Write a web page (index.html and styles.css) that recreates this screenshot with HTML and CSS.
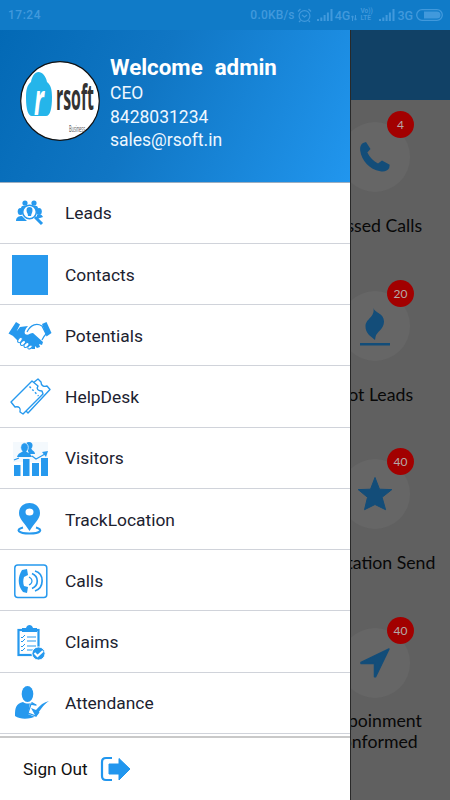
FILE: index.html
```html
<!DOCTYPE html>
<html lang="en">
<head>
<meta charset="utf-8">
<title>Dashboard menu</title>
<link rel="stylesheet" href="styles.css">
</head>
<body>
<div class="screen">
  <header class="status">
    <span class="clock">17:24</span>
    <span class="speed">0.0KB/s</span>
    <svg class="alarm" width="15" height="15" viewBox="0 0 15 15"><g fill="none" stroke="currentColor" stroke-width="1.2"><circle cx="7.5" cy="8" r="5.4"/><path d="M5 7l2.5 2L10 7M1 3.5L3.5 1M14 3.5L11.5 1M3.5 12.5L2 14M11.5 12.5L13 14"/></g></svg>
    <svg class="signal" width="16" height="12" viewBox="0 0 16 12"><path fill="currentColor" d="M0 10h2v2H0zM3.3 8.500h2V12h-2zM6.600 6h2v6h-2zM9.900 3.500h2V12h-2zM13.500 0h2v12h-2z"/></svg>
    <span class="net">4G</span>
    <svg class="data" width="6" height="6" viewBox="0 0 6 6"><path d="M1.500 6V1M0 2.500L1.500.8 2.800 2.500M4.500 0v5M3.200 3.500L4.500 5.200 6 3.500" fill="none" stroke="currentColor"/></svg>
    <span class="volte"><span>Vo))</span><span>LTE</span></span>
    <svg class="signal second" width="16" height="12" viewBox="0 0 16 12"><path fill="currentColor" d="M0 10h2v2H0zM3.300 8.500h2V12h-2zM6.600 6h2v6h-2zM9.900 3.500h2V12h-2zM13.500 0h2v12h-2z"/></svg>
    <span class="net">3G</span>
    <svg class="battery" width="27" height="12" viewBox="0 0 27 12"><rect x=".7" y=".7" width="25.600" height="10.600" rx="5.300" fill="none" stroke="currentColor" stroke-width="1.300"/><path fill="currentColor" d="M8 2.500h13a3.500 3.500 0 0 1 0 7H8z"/></svg>
  </header>

  <main class="dashboard">
    <div class="appbar"></div>
    <div class="cards">
      <section class="card">
        <div class="disc"><svg width="30" height="30" viewBox="0 0 30 30"><path fill="currentColor" d="M3 1L6 0l4.500 7-3.200 3.500c2.500 5 6.200 8.600 10.700 11l4-3 7.700 4.300-.5 3.200c-1.500 3-5 4-9 3.200C9.500 27.500 1.500 18.500.2 8.500-.2 5 .8 2.400 3 1z"/></svg><span class="badge">4</span></div>
        <div class="label">Missed Calls</div>
      </section>
      <section class="card">
        <div class="disc"><svg class="flame" width="30" height="38" viewBox="0 0 30 38"><path fill="currentColor" d="M13.500 0c1 5 10.500 5 10.500 13.500 0 8-7.500 10-8.500 15.500L15 32C10 28 5.500 25 5.500 18.500 5.500 10.500 15 9.500 13.500 0zM0 35h30v2.500H0z"/></svg><span class="badge">20</span></div>
        <div class="label">Hot Leads</div>
      </section>
      <section class="card">
        <div class="disc"><svg width="36" height="36" viewBox="0 0 36 36"><path fill="currentColor" stroke="currentColor" stroke-linejoin="round" d="M18 1.500l4.500 11.700 12.300.4-9.700 7.700 3.500 12.400L18 28.500 7.500 33.700 10.500 21.300l-9.300-7.700 12.300-.4z"/></svg><span class="badge">40</span></div>
        <div class="label">Quotation Send</div>
      </section>
      <section class="card">
        <div class="disc"><svg width="30" height="30" viewBox="0 0 30 30"><path fill="currentColor" stroke="currentColor" stroke-linejoin="round" stroke-width="1.500" d="M29 1L15.500 28.800h-1V15.500H1v-1z"/></svg><span class="badge">40</span></div>
        <div class="label">Appoinment<br>Conformed</div>
      </section>
    </div>
  </main>

  <aside class="drawer">
    <div class="profile">
      <svg class="avatar" width="80" height="80" viewBox="0 0 80 80">
        <circle cx="40" cy="40" r="39.300" fill="#fff" stroke="#111" stroke-width="1.200"/>
        <path fill="#25b5ea" d="M11 21c1-6 4-10 7.500-10S26 15 27 21c4 3 5 8 5 15 0 12-2 19-6 19H12c-4 0-6-7-6-18 0-8 1-13 5-16z"/>
        <text class="mark" x="14" y="54" textLength="10" lengthAdjust="spacingAndGlyphs">r</text>
        <text class="brand" x="36" y="49" textLength="38" lengthAdjust="spacingAndGlyphs">rsoft</text>
        <text class="tagline" x="49" y="71" textLength="16" lengthAdjust="spacingAndGlyphs">Business</text>
      </svg>
      <div class="who">
        <h1><span>Welcome</span> <span>admin</span></h1>
        <p>CEO</p>
        <p>8428031234</p>
        <p>sales@rsoft.in</p>
      </div>
    </div>
    <nav class="menu">
      <a class="item"><span class="icon"><svg width="36" height="40" viewBox="0 0 36 40"><g fill="currentColor"><circle cx="13" cy="10" r="2.600"/><circle cx="22" cy="10" r="2.600"/><path d="M9 15c0-3 7-3 8-1l-7 5zM26 15c0-3-7-3-8-1l7 5z"/><ellipse cx="8.500" cy="18.500" rx="2.800" ry="3.500"/><ellipse cx="27" cy="18.500" rx="2.800" ry="3.500"/><path d="M4 28c0-4 3-5 6-5l5 5zM31 24c-1-3-4-3-6-2v4z"/></g><circle cx="17.500" cy="19" r="6.800" fill="#fff" stroke="currentColor" stroke-width="1.500"/><path fill="currentColor" d="M17.500 14a3 3 0 0 1 3 3c0 3-1 3-1.500 6h-3c0-3-1.500-3-1.500-6a3 3 0 0 1 3-3z"/><path d="M23 24l7 7" stroke="currentColor" stroke-width="3"/></svg></span>Leads</a>
      <a class="item"><span class="icon"><span class="square"></span></span>Contacts</a>
      <a class="item"><span class="icon"><svg width="44" height="40" viewBox="0 0 44 40"><g fill="currentColor"><path d="M8 6l4 2.500-6 12-5.500-3zM34 8l4.500-2 5 11-5 3.500zM12 11l8-1c-3 3-4 6-3 8 3 2 5-1 8-1l10 9-1 3-3-1 1 3-3 1-2-2v3h-3l-7-5-4 0-4-4-4-4z"/></g><path fill="none" stroke="currentColor" stroke-width="1.200" d="M19 16c4-8 10-9 15-6l4 8c-2 2-3 4-4 6M8 20l2 4"/><g fill="#fff" stroke="currentColor"><ellipse cx="12" cy="24" rx="1.800" ry="3" transform="rotate(35 12 24)"/><ellipse cx="15" cy="27" rx="1.800" ry="3" transform="rotate(45 15 27)"/><ellipse cx="18.500" cy="29" rx="1.800" ry="3" transform="rotate(45 18.500 29)"/><ellipse cx="22" cy="31" rx="1.500" ry="2.500" transform="rotate(55 22 31)"/></g></svg></span>Potentials</a>
      <a class="item"><span class="icon"><svg width="42" height="40" viewBox="0 0 42 40"><g fill="#fff" stroke="currentColor" stroke-width="1.400" stroke-linejoin="round"><path d="M24 6l5-4 3 3c0 4 3 5 6 4l3 3.500L19 36l-3-3z"/><path d="M23 4l6 5c-2 3 0 5 4 5l1 3L14 37l-3-2c1-4-1-6-5-5l-4-5z"/><path d="M20.500 9.500l9 9.500" stroke-dasharray="2 2"/></g></svg></span>HelpDesk</a>
      <a class="item"><span class="icon"><svg width="36" height="40" viewBox="0 0 36 40"><path fill="#f4f9fd" d="M1 4h35v20H1z"/><g fill="currentColor"><path d="M2 27h6.500v11H2zM11 21h6.500v17H11zM20 25h7v13h-7zM29 20h7v18h-7z"/><circle cx="17" cy="7.500" r="3.500"/><path d="M15 10h4c1 3 4 3 4 6h-6z"/><ellipse cx="12.500" cy="9.500" rx="3.800" ry="4.700" stroke="#fff" stroke-width=".7"/><path d="M5 19c1-4 4-4 6-6h3c1 2 5 2 6 6zM36 13l-2 6-4-5z"/></g><path d="M2 22l5-2M20 18l4 3 9-5" fill="none" stroke="currentColor" stroke-width="1.200"/></svg></span>Visitors</a>
      <a class="item"><span class="icon"><svg width="36" height="40" viewBox="0 0 36 40"><path fill="currentColor" fill-rule="evenodd" d="M17.500 3C24 3 28 7.500 28 13c0 6-5 9-10.500 18C12 22 7 19 7 13 7 7.500 11 3 17.500 3zm0 5.500a4 3.500 0 1 0 0 7 4 3.500 0 0 0 0-7z"/><path fill="none" stroke="currentColor" stroke-width="2" d="M11 27.500c-8 2-5 6 6.500 6s14-4 6.500-6"/></svg></span>TrackLocation</a>
      <a class="item"><span class="icon"><svg width="36" height="40" viewBox="0 0 36 40"><rect x="2.800" y="4" width="32" height="32.500" rx="3" fill="none" stroke="currentColor" stroke-width="1.500"/><path fill="currentColor" d="M10 9l5-1 1 6-4 2c-1 3-1 6 0 9l4 1-1 6-4-1C5 24 6 15 10 9z"/><path fill="none" stroke="currentColor" stroke-width="1.200" d="M17 16c4 2 4 6 0 8"/><path fill="none" stroke="currentColor" stroke-width="1.700" d="M20 12.500c7 3 7 12 0 15M23 10c10 3 9 17 0 20"/></svg></span>Calls</a>
      <a class="item"><span class="icon"><svg width="36" height="40" viewBox="0 0 36 40"><rect x="6.500" y="8" width="20" height="25" fill="#fff" stroke="currentColor" stroke-width="2.200"/><path fill="currentColor" d="M10 6h4c1-4 6-4 7 0h4v4H10z"/><path fill="none" stroke="currentColor" d="M9 15l1 1 3-3M15 15h9M9 19l1 1 3-3M15 19h9M9 24l1 1 3-3M15 24h9M9 28l1 1 3-3M15 28h6"/><circle cx="26.500" cy="31.500" r="6.600" fill="currentColor" stroke="#fff"/><path fill="none" stroke="#fff" stroke-width="2" d="M22.500 31l3 3 5.500-5"/></svg></span>Claims</a>
      <a class="item"><span class="icon"><svg width="40" height="40" viewBox="0 0 40 40"><g fill="currentColor"><ellipse cx="17.500" cy="11" rx="5.800" ry="8"/><path d="M5 33c0-9 1-12 8-14 3 2 7 2 9 0l5 3v11c-7 3-16 4-22 0z"/></g><path fill="#fff" d="M20 20l11 4-1 12-12-5z"/><path fill="none" stroke="currentColor" stroke-width="1.300" d="M26 22l-5-1-3 9 8 3 3-4"/><path fill="currentColor" d="M21 25l5 2c4-5 8-8 13-9-6 4-9 9-13 16z"/></svg></span>Attendance</a>
    </nav>
    <a class="signout">Sign Out <svg width="32" height="26" viewBox="0 0 32 26"><path fill="none" stroke="currentColor" stroke-width="2.200" d="M12 2H6Q2 2 2 6v14q0 4 4 4h6"/><path fill="currentColor" stroke="currentColor" stroke-linejoin="round" d="M9 8h10V2.500L30 13 19 24v-6H9z"/></svg></a>
  </aside>
</div>
</body>
</html>
```

FILE: styles.css
```css
* { box-sizing: border-box; }
body { margin: 0; font-family: Roboto, "Liberation Sans", sans-serif; }
svg { display: block; flex: none; }
.screen {
  position: relative;
  display: flex;
  flex-direction: column;
  width: 450px;
  height: 800px;
  overflow: hidden;
}
.status {
  display: flex;
  align-items: center;
  height: 30px;
  flex: none;
  padding: 0 7px 0 8px;
  background: #107bc8;
  color: #4199dc;
  font-size: 12px;
  font-weight: 500;
}
.clock { letter-spacing: .5px; }
.speed { margin-left: auto; letter-spacing: .2px; }
.alarm { margin-left: 2px; }
.signal { margin-left: 5px; }
.signal.second { margin-left: 5px; }
.net { margin-left: 2px; font-size: 12.500px; }
.data { margin: 6px 0 0 1px; }
.volte { display: grid; margin-left: 3px; font-size: 6.500px; line-height: 7px; font-weight: 700; width: 14px; }
.battery { margin-left: 3px; }

.dashboard { flex: 1; background: #606060; }
.appbar { height: 70px; background: #114166; }
.cards {
  display: grid;
  grid-auto-rows: 168.500px;
  width: 150px;
  margin-left: auto;
  padding-top: 22px;
}
.card { display: flex; flex-direction: column; align-items: center; gap: 12.500px; }
.disc {
  position: relative;
  display: grid;
  place-items: center;
  width: 70px;
  height: 70px;
  border-radius: 50%;
  background: #666;
  color: #134d79;
}
.flame { margin-top: 2px; }
.badge {
  position: absolute;
  top: -11px;
  right: -4px;
  width: 27px;
  height: 27px;
  border-radius: 50%;
  background: #a20000;
  color: #b5a8a8;
  font: 12px/28px Lato, sans-serif;
  text-align: center;
}
.label {
  display: flex;
  align-items: center;
  height: 42px;
  color: #080808;
  font: 17.700px/21px Lato, sans-serif;
  text-align: center;
  white-space: nowrap;
  margin-right: 2px;
}

.drawer {
  position: absolute;
  top: 30px;
  left: 0;
  bottom: 0;
  display: flex;
  flex-direction: column;
  width: 350px;
  background: #fff;
  box-shadow: 1px 0 #292929;
}
.profile {
  display: flex;
  height: 152.500px;
  flex: none;
  padding: 23px 0 0 20px;
  gap: 10px;
  background: linear-gradient(115deg, #0369b5, #1076c4 42%, #2196ee);
  border-bottom: 1.500px solid #9daec0;
  color: #eef7ff;
}
.avatar { margin-top: 8px; }
.mark { font: italic 700 43px "Open Sans", sans-serif; fill: #fff; }
.brand { font: 700 36px "Open Sans", sans-serif; fill: #333; }
.tagline { font: 9px "Open Sans", sans-serif; fill: #555; }
.who h1 { display: flex; gap: 12px; margin: 0; font-size: 22.300px; line-height: 29px; font-weight: 700; color: #fff; }
.who p { margin: 0; font-size: 17.500px; line-height: 23.700px; }
.menu { display: flex; flex-direction: column; }
.item {
  display: flex;
  align-items: center;
  height: 61.250px;
  padding-top: 1.500px;
  border-bottom: 1.400px solid #d0d3da;
  color: #1c2230;
  font-size: 17.400px;
}
.icon { display: flex; justify-content: center; width: 60px; margin-right: 5px; color: #2699ee; }
.square { width: 36px; height: 40px; background: #2899ed; }
.signout {
  display: flex;
  align-items: center;
  gap: 12px;
  flex: 1;
  margin-top: 2px;
  padding: 0 0 0 23px;
  border-top: 2px solid #c9c9c9;
  color: #111;
  font-size: 17.200px;
}
.signout svg { color: #2196ee; }
```
